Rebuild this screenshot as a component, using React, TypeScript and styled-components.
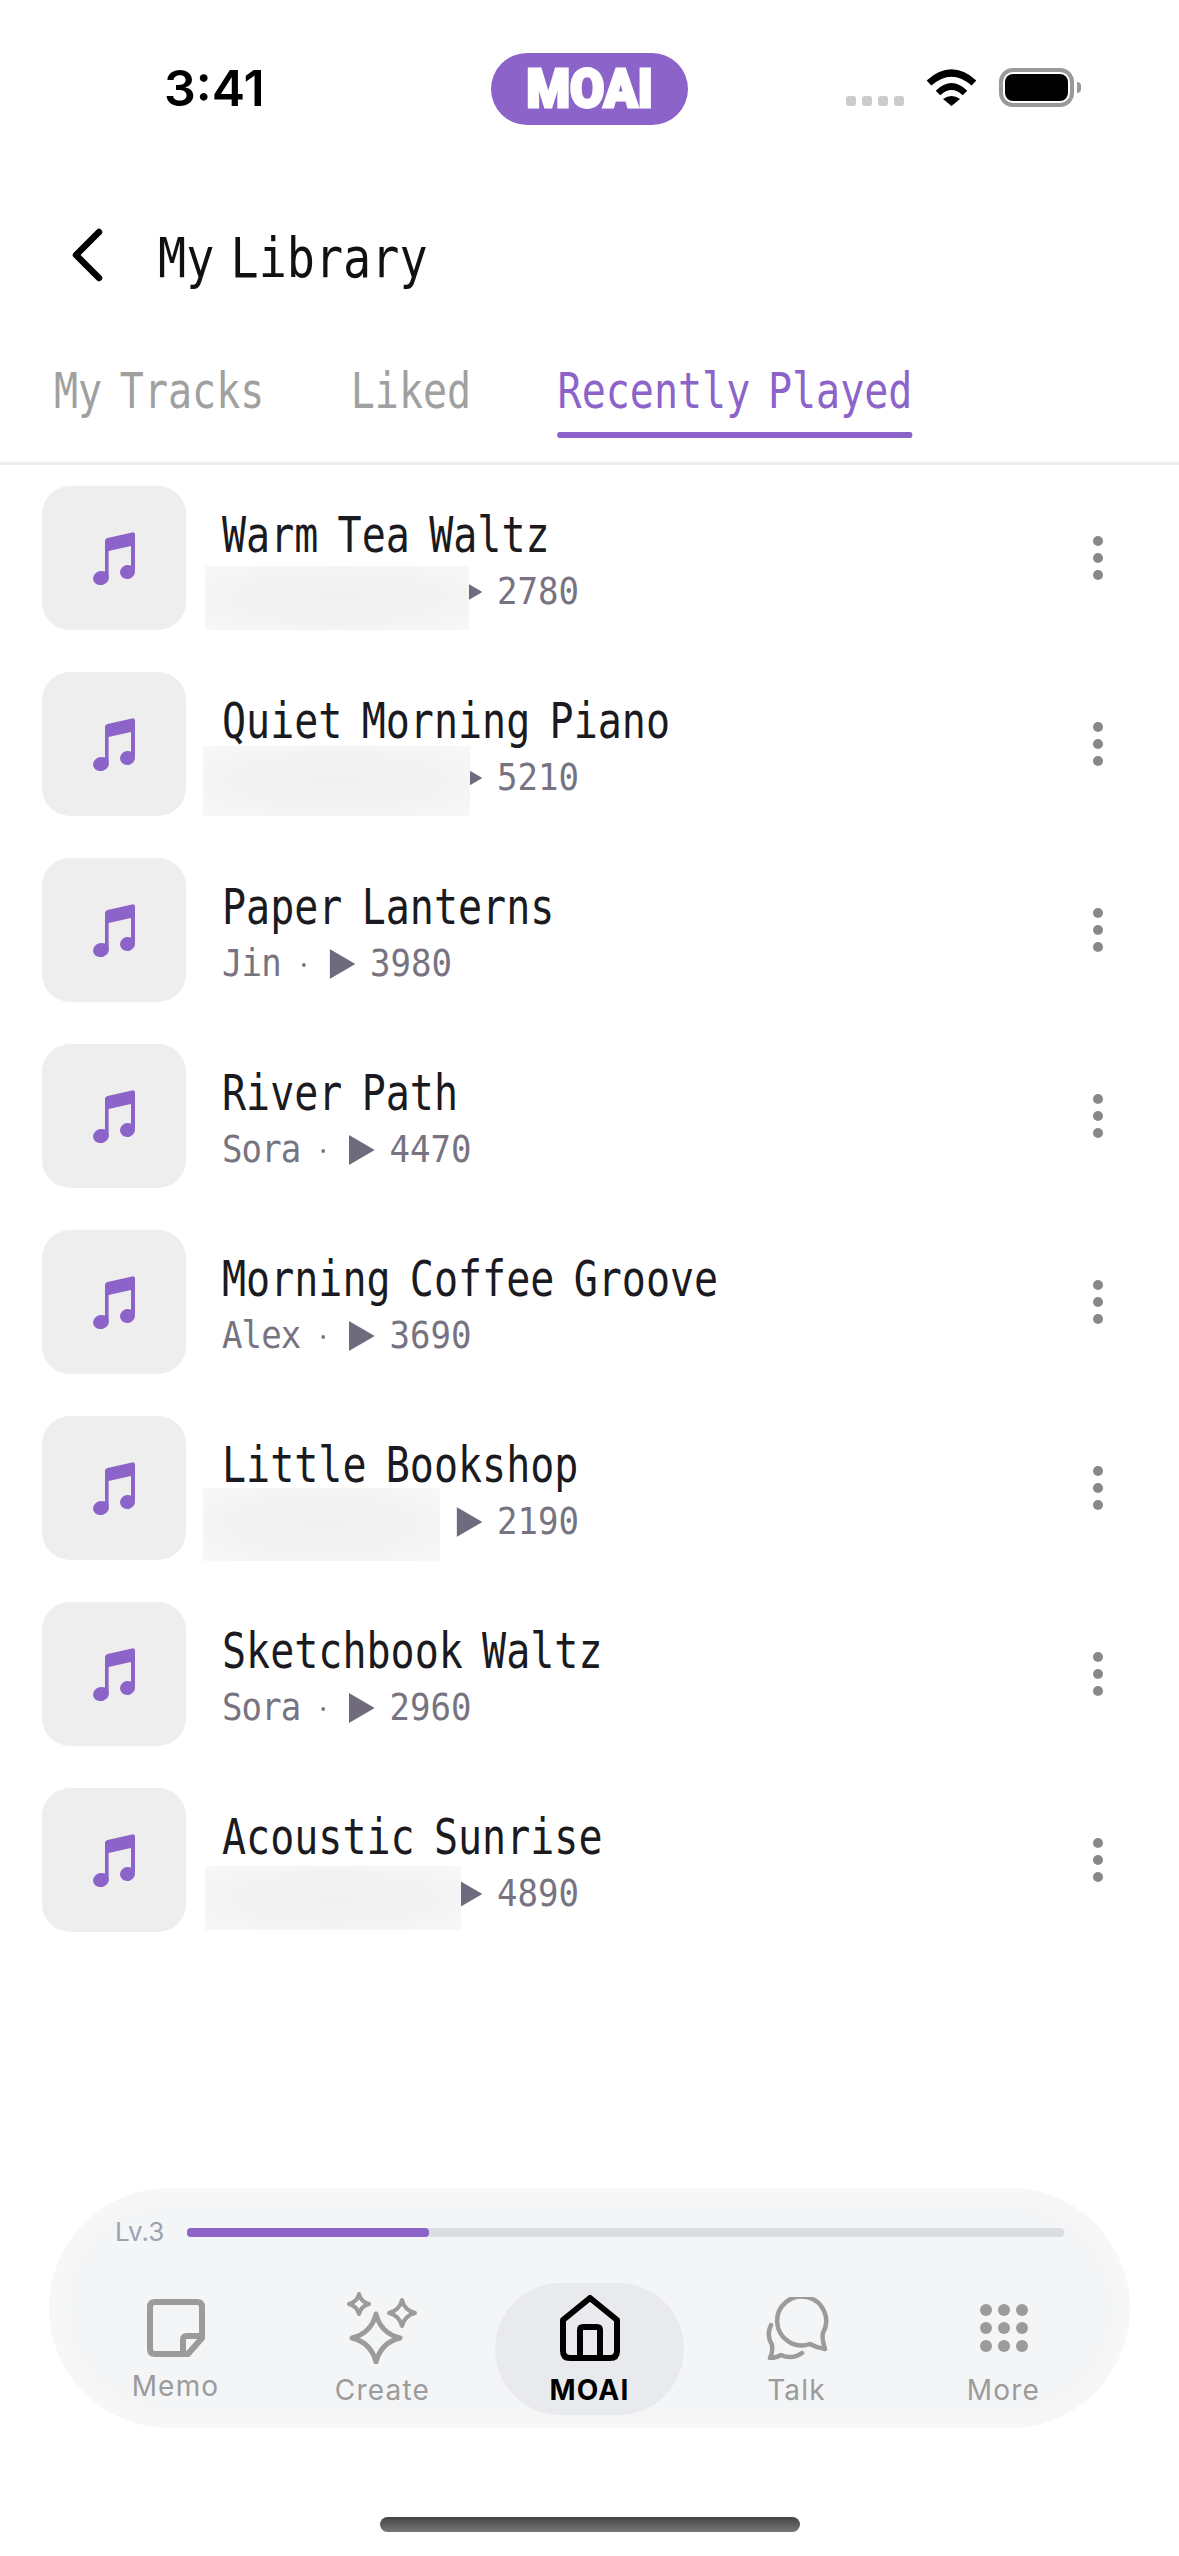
import styled, { createGlobalStyle } from 'styled-components';

const GlobalStyle = createGlobalStyle`
  html, body {
    margin: 0;
    padding: 0;
    background: #fff;
  }
`;

const MONO = '"DejaVu Sans Mono", "Liberation Mono", monospace';
const SANS = 'Inter, "Noto Sans", sans-serif';
const PURPLE = '#8c63c8';

const Page = styled.div`
  width: 1179px;
  height: 2556px;
  display: flex;
  flex-direction: column;
  overflow: hidden;
  background: #fff;
  font-family: ${SANS};
`;

/* status bar */
const StatusBar = styled.div`
  height: 160px;
  box-sizing: border-box;
  padding: 53px 98px 0 164px;
  display: flex;
  align-items: flex-start;
`;

const Clock = styled.div`
  width: 327px;
  font-size: 50px;
  line-height: 70px;
  font-weight: 600;
  color: #000;
`;

const Brand = styled.div`
  width: 197px;
  height: 72px;
  border-radius: 36px;
  background: ${PURPLE};
  display: flex;
  align-items: center;
  justify-content: center;
`;

const BrandText = styled.span`
  font-family: Roboto, sans-serif;
  font-size: 54px;
  line-height: 72px;
  font-weight: 900;
  color: #fff;
  -webkit-text-stroke: 3px #fff;
  transform: scaleX(0.92);
`;

const StatusIcons = styled.div`
  margin-left: 158px;
  display: flex;
  align-items: flex-start;
`;

const SignalDots = styled.div`
  display: flex;
  gap: 6px;
  margin: 43px 22px 0 0;
`;

const SignalDot = styled.span`
  width: 10px;
  height: 10px;
  border-radius: 3px;
  background: #ccc;
`;

const Battery = styled.div`
  margin: 15px 0 0 22px;
  width: 75px;
  height: 39px;
  box-sizing: border-box;
  border: 4px solid #999;
  border-radius: 14px;
  padding: 2px;
  position: relative;
  &::after {
    content: '';
    position: absolute;
    right: -11px;
    top: 10px;
    width: 4px;
    height: 11px;
    border-radius: 0 4px 4px 0;
    background: #999;
  }
`;

const BatteryLevel = styled.div`
  height: 100%;
  border-radius: 8px;
  background: #000;
`;

/* header */
const Header = styled.header`
  height: 192px;
  box-sizing: border-box;
  padding: 68px 0 0 72px;
  display: flex;
  align-items: flex-start;
`;

const PageTitle = styled.h1`
  margin: -2px 0 0 54px;
  font-family: ${MONO};
  font-size: 55px;
  line-height: 64px;
  font-weight: 400;
  color: #111;
  white-space: nowrap;
  word-spacing: -14px;
  transform: scaleX(0.85);
  transform-origin: left;
`;

/* tabs */
const TabBar = styled.nav`
  height: 113px;
  box-sizing: border-box;
  padding-left: 54px;
  border-bottom: 3px solid #eee;
`;

const TabRow = styled.div`
  display: flex;
  gap: 108px;
  transform: scaleX(0.8);
  transform-origin: left;
`;

const Tab = styled.div<{ $active?: boolean }>`
  font-family: ${MONO};
  font-size: 50px;
  line-height: 56px;
  white-space: nowrap;
  word-spacing: -8px;
  color: ${(p) => (p.$active ? PURPLE : '#a0a0a0')};
  padding-top: 11px;
`;

const TabUnderline = styled.div`
  margin-top: 13px;
  height: 6px;
  border-radius: 3px;
  background: ${PURPLE};
`;

/* track list */
const TrackList = styled.div`
  padding: 21px 76px 0 42px;
  display: flex;
  flex-direction: column;
  gap: 42px;
`;

const TrackRow = styled.div`
  position: relative;
  height: 144px;
  display: flex;
  align-items: center;
`;

const Thumb = styled.div`
  width: 144px;
  height: 144px;
  flex: none;
  border-radius: 28px;
  background: #eeeeee;
  display: flex;
  align-items: center;
  justify-content: center;
`;

const TrackInfo = styled.div`
  flex: 1;
  margin: 3px 0 0 36px;
  display: flex;
  flex-direction: column;
`;

const TrackTitle = styled.div`
  font-family: ${MONO};
  font-size: 50px;
  line-height: 60px;
  color: #1a1a20;
  white-space: nowrap;
  word-spacing: -6px;
  transform: scaleX(0.8);
  transform-origin: left;
`;

const TrackMeta = styled.div`
  margin-top: 5px;
  display: flex;
  align-items: center;
  font-family: ${MONO};
  font-size: 37px;
  line-height: 44px;
  color: #777381;
  white-space: nowrap;
  transform: scaleX(0.92);
  transform-origin: left;
`;

const Artist = styled.span`
  letter-spacing: -1px;
`;

const MetaDot = styled.span`
  width: 4px;
  height: 4px;
  border-radius: 50%;
  background: #777381;
  margin: 2px 26px 0 23px;
`;

const HiddenArtist = styled.span<{ $width: number }>`
  width: ${(p) => p.$width}px;
`;

const PlayMark = styled.svg`
  width: 28px;
  height: 30px;
  margin-right: 16px;
  flex: none;
`;

const Redaction = styled.div<{ $left: number; $top: number; $width: number; $height: number }>`
  position: absolute;
  left: ${(p) => p.$left}px;
  top: ${(p) => p.$top}px;
  width: ${(p) => p.$width}px;
  height: ${(p) => p.$height}px;
  background: radial-gradient(ellipse at 50% 50%, #f1f1f2 0%, #f3f3f4 55%, #f8f8f8 100%);
`;

const Kebab = styled.div`
  display: flex;
  flex-direction: column;
  gap: 7px;
`;

const KebabDot = styled.span`
  width: 10px;
  height: 10px;
  border-radius: 50%;
  background: #888;
`;

/* bottom navigation */
const BottomNav = styled.div`
  margin: auto 49px 0;
  height: 240px;
  box-sizing: border-box;
  padding-top: 34px;
  border-radius: 120px;
  background: #f4f5f6;
  box-shadow: inset 0 0 40px rgba(255, 255, 255, 0.45);
`;

const LevelRow = styled.div`
  height: 20px;
  padding: 0 66px;
  display: flex;
  align-items: center;
  gap: 23px;
`;

const LevelLabel = styled.span`
  font-size: 26px;
  line-height: 20px;
  color: #9ca2b0;
`;

const LevelTrack = styled.div`
  flex: 1;
  height: 9px;
  border-radius: 4px;
  background: #dcdde1;
`;

const LevelFill = styled.div`
  height: 100%;
  border-radius: 4px;
  background: ${PURPLE};
`;

const NavGrid = styled.div`
  margin: 41px 23px 0;
  display: grid;
  grid-template-columns: repeat(5, 207px);
`;

const NavItem = styled.div<{ $active?: boolean }>`
  height: 132px;
  margin: 0 9px;
  border-radius: 66px;
  background: ${(p) => (p.$active ? '#e9eaed' : 'transparent')};
  color: ${(p) => (p.$active ? '#000' : '#9b9b9b')};
  display: flex;
  flex-direction: column;
  align-items: center;
`;

const NavIcon = styled.div`
  height: 90px;
  display: flex;
  align-items: center;
  justify-content: center;
`;

const NavLabel = styled.span<{ $active?: boolean; $lift?: number }>`
  font-size: 28px;
  line-height: 34px;
  letter-spacing: 1.2px;
  font-weight: ${(p) => (p.$active ? 700 : 400)};
  margin-top: ${(p) => -(p.$lift ?? 0)}px;
`;

const MoreGrid = styled.div`
  display: grid;
  grid-template-columns: repeat(3, 12px);
  gap: 6px;
`;

const MoreDot = styled.span`
  width: 12px;
  height: 12px;
  border-radius: 50%;
  background: currentColor;
`;

const HomeBar = styled.div`
  margin: 89px auto 24px;
  width: 420px;
  height: 15px;
  border-radius: 8px;
  background: linear-gradient(#444, #777);
`;

const star = (cx: number, cy: number, r: number) => {
  const k = r * 0.2;
  return `M${cx} ${cy - r}Q${cx + k} ${cy - k} ${cx + r} ${cy}Q${cx + k} ${cy + k} ${cx} ${cy + r}Q${cx - k} ${cy + k} ${cx - r} ${cy}Q${cx - k} ${cy - k} ${cx} ${cy - r}Z`;
};

function NoteIcon() {
  return (
    <svg width="42" height="53" viewBox="0 0 42 53" fill={PURPLE}>
      <path d="M12 9.5Q12 6.6 14.6 6L39 .4Q42 0 42 2.8V14L38 14L15.5 19L12 20Z" />
      <rect x="12" y="8" width="3.6" height="36" />
      <rect x="38" y="2" width="4" height="36" />
      <ellipse cx="8" cy="46" rx="8" ry="7" transform="rotate(-18 8 46)" />
      <ellipse cx="34.5" cy="40" rx="7.5" ry="7" transform="rotate(-18 34.5 40)" />
    </svg>
  );
}

function BackIcon() {
  return (
    <svg width="32" height="54" viewBox="0 0 32 54" fill="none" stroke="#000" strokeWidth="6.5" strokeLinecap="round" strokeLinejoin="round">
      <path d="M27 4L4 27L27 50" />
    </svg>
  );
}

function WifiIcon() {
  return (
    <svg width="51" height="37" viewBox="0 0 51 37" style={{ marginTop: 16 }}>
      <path d="M3 14Q25.5 -6 48 14" fill="none" stroke="#000" strokeWidth="7" />
      <path d="M12 24Q25.5 11 39 24" fill="none" stroke="#000" strokeWidth="6.5" />
      <path d="M17 30Q25.5 24 34 30L25.5 37Z" fill="#000" />
    </svg>
  );
}

function MemoIcon() {
  return (
    <svg width="58" height="58" viewBox="0 0 58 58" fill="none" stroke="currentColor" strokeWidth="6" strokeLinejoin="round">
      <path d="M8 3H50Q55 3 55 8V39L41 55H8Q3 55 3 50V8Q3 3 8 3Z" />
      <path d="M55 37H40Q36 37 36 41V55" />
    </svg>
  );
}

function CreateIcon() {
  return (
    <svg width="72" height="72" viewBox="0 0 72 72" fill="none" stroke="currentColor" strokeLinejoin="round">
      <path d={star(29, 46, 24)} strokeWidth="5" />
      <path d={star(12, 12, 10)} strokeWidth="4" />
      <path d={star(55, 21, 13)} strokeWidth="4" />
    </svg>
  );
}

function HomeIcon() {
  return (
    <svg width="60" height="66" viewBox="0 0 60 66" fill="none" stroke="currentColor" strokeWidth="6" strokeLinejoin="round">
      <path d="M30 3L57 25V56Q57 63 50 63H10Q3 63 3 56V25Z" />
      <path d="M20 63V35Q20 32 23 32H37Q40 32 40 35V63" />
    </svg>
  );
}

function TalkIcon() {
  return (
    <svg width="64" height="63" viewBox="0 0 64 63" fill="none" stroke="currentColor" strokeWidth="4.5" strokeLinecap="round" strokeLinejoin="round">
      <path d="M45 47A24.5 24.5 0 1 1 58 36Q56.5 40 60 52Q52 51 45 47Z" />
      <path d="M6 28Q1 38 7 48Q8 56 5 61Q11 61 16 58Q27 63 37 56" />
    </svg>
  );
}

type Track = { title: string; artist?: string; plays: number; hiddenWidth?: number; redact?: [number, number, number, number] };

const tracks: Track[] = [
  { title: 'Warm Tea Waltz', plays: 2780, hiddenWidth: 255, redact: [163, 80, 264, 64] },
  { title: 'Quiet Morning Piano', plays: 5210, hiddenWidth: 255, redact: [161, 74, 267, 70] },
  { title: 'Paper Lanterns', artist: 'Jin', plays: 3980 },
  { title: 'River Path', artist: 'Sora', plays: 4470 },
  { title: 'Morning Coffee Groove', artist: 'Alex', plays: 3690 },
  { title: 'Little Bookshop', plays: 2190, hiddenWidth: 255, redact: [161, 72, 237, 73] },
  { title: 'Sketchbook Waltz', artist: 'Sora', plays: 2960 },
  { title: 'Acoustic Sunrise', plays: 4890, hiddenWidth: 255, redact: [163, 78, 256, 64] },
];

const navItems = [
  { label: 'Memo', icon: <MemoIcon />, lift: 4 },
  { label: 'Create', icon: <CreateIcon /> },
  { label: 'MOAI', icon: <HomeIcon />, active: true },
  { label: 'Talk', icon: <TalkIcon /> },
  {
    label: 'More',
    icon: (
      <MoreGrid>
        {Array.from({ length: 9 }, (_, i) => (
          <MoreDot key={i} />
        ))}
      </MoreGrid>
    ),
  },
];

export default function App() {
  return (
    <Page>
      <GlobalStyle />

      <StatusBar>
        <Clock>3:41</Clock>
        <Brand>
          <BrandText>MOAI</BrandText>
        </Brand>
        <StatusIcons>
          <SignalDots>
            <SignalDot />
            <SignalDot />
            <SignalDot />
            <SignalDot />
          </SignalDots>
          <WifiIcon />
          <Battery>
            <BatteryLevel />
          </Battery>
        </StatusIcons>
      </StatusBar>

      <Header>
        <BackIcon />
        <PageTitle>My Library</PageTitle>
      </Header>

      <TabBar>
        <TabRow>
          <Tab>My Tracks</Tab>
          <Tab>Liked</Tab>
          <Tab $active>
            Recently Played
            <TabUnderline />
          </Tab>
        </TabRow>
      </TabBar>

      <TrackList>
        {tracks.map((t) => (
          <TrackRow key={t.title}>
            <Thumb>
              <NoteIcon />
            </Thumb>
            <TrackInfo>
              <TrackTitle>{t.title}</TrackTitle>
              <TrackMeta>
                {t.artist ? (
                  <>
                    <Artist>{t.artist}</Artist>
                    <MetaDot />
                  </>
                ) : (
                  <HiddenArtist $width={t.hiddenWidth ?? 0} />
                )}
                <PlayMark viewBox="0 0 28 30">
                  <path d="M0 0L28 15L0 30Z" fill="#6f6a7c" />
                </PlayMark>
                {t.plays}
              </TrackMeta>
            </TrackInfo>
            <Kebab>
              <KebabDot />
              <KebabDot />
              <KebabDot />
            </Kebab>
            {t.redact && (
              <Redaction $left={t.redact[0]} $top={t.redact[1]} $width={t.redact[2]} $height={t.redact[3]} />
            )}
          </TrackRow>
        ))}
      </TrackList>

      <BottomNav>
        <LevelRow>
          <LevelLabel>Lv.3</LevelLabel>
          <LevelTrack>
            <LevelFill style={{ width: `${(242 / 877) * 100}%` }} />
          </LevelTrack>
        </LevelRow>
        <NavGrid>
          {navItems.map((item) => (
            <NavItem key={item.label} $active={item.active}>
              <NavIcon>{item.icon}</NavIcon>
              <NavLabel $active={item.active} $lift={item.lift}>
                {item.label}
              </NavLabel>
            </NavItem>
          ))}
        </NavGrid>
      </BottomNav>
      <HomeBar />
    </Page>
  );
}
